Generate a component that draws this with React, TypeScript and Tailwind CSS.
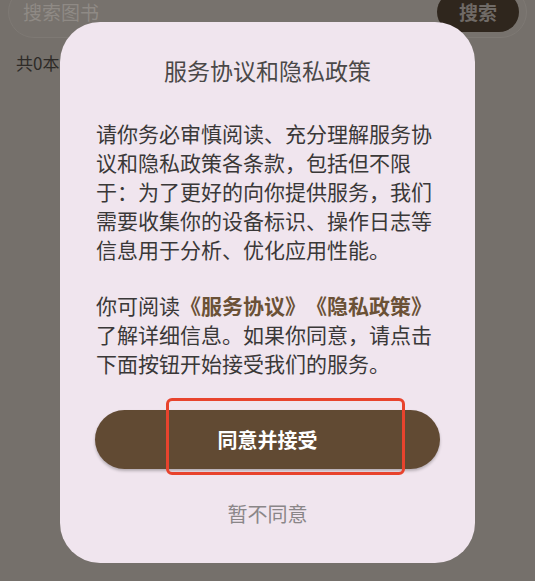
import React from 'react';

const font = { fontFamily: '"Noto Sans CJK SC", "Noto Sans", sans-serif' };

const PrivacyDialog = () => {
  return (
    <div className="absolute left-[60px] top-[22px] w-[415px] h-[541px] rounded-[40px] bg-[#f0e5ee] flex flex-col px-[35px] [text-spacing-trim:space-all]">
      <h2 className="pt-[33px] text-center text-[23px] leading-[30px] text-[#4a4848] font-normal">
        服务协议和隐私政策
      </h2>

      <p className="mt-[34px] pl-[1px] text-[21px] leading-[29px] text-[#3a3838]">
        请你务必审慎阅读、充分理解服务协议和隐私政策各条款，包括但不限于：为了更好的向你提供服务，我们需要收集你的设备标识、操作日志等信息用于分析、优化应用性能。
      </p>

      <p className="mt-[27px] pl-[1px] text-[21px] leading-[29px] text-[#3a3838]">
        你可阅读<span className="font-bold text-[#6b5136]">《服务协议》</span>
        <span className="font-bold text-[#6b5136]">《隐私政策》</span>
        了解详细信息。如果你同意，请点击下面按钮开始接受我们的服务。
      </p>

      <button className="mt-[32px] h-[59px] w-full rounded-full bg-[#614a33] text-white text-[20px] font-bold shadow-[0_2px_3px_rgba(0,0,0,0.25)]">
        同意并接受
      </button>

      <button className="mt-[30px] h-[30px] text-[20px] leading-[30px] text-[#8a8688]">
        暂不同意
      </button>
    </div>
  );
};

export default function App() {
  return (
    <div className="relative w-[535px] h-[581px] overflow-hidden bg-[#75706b]" style={font}>
      {/* Search bar (dimmed behind the dialog) */}
      <div className="mx-[8px] -mt-[14px] h-[52px] rounded-full border border-[#7e7974] bg-[#77726d] flex items-center pl-[14px] pr-[7px]">
        <span className="flex-1 text-[19px] text-[#8f8a85]">搜索图书</span>
        <div className="h-[40px] w-[82px] rounded-full bg-[#2f261d] flex items-center justify-center">
          <span className="text-[19px] font-bold text-[#6f6a66]">搜索</span>
        </div>
      </div>

      <div className="mt-[12px] pl-[16px] text-[17px] text-[#2e2b28]">共0本</div>

      <PrivacyDialog />

      {/* Red highlight annotation over the accept button */}
      <div className="absolute left-[166px] top-[398px] w-[239px] h-[77px] rounded-[6px] border-[3px] border-[#e8432d]" />
    </div>
  );
}
